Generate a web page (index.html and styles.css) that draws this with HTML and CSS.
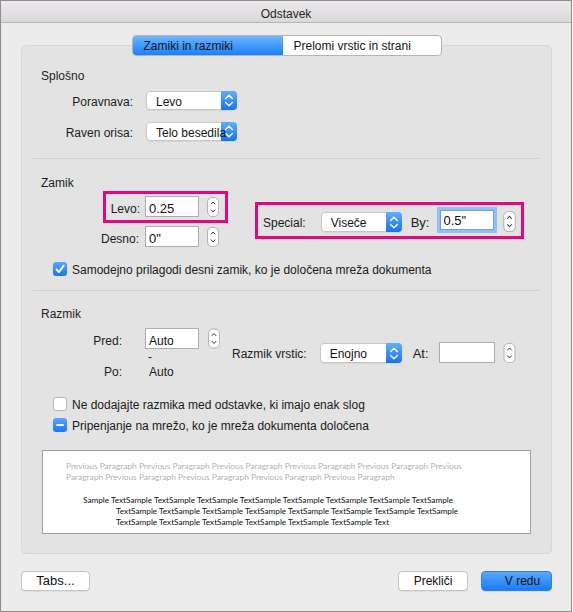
FILE: index.html
```html
<!DOCTYPE html>
<html lang="sl">
<head>
<meta charset="utf-8">
<title>Odstavek</title>
<link rel="stylesheet" href="styles.css">
</head>
<body>
<div class="window">
  <header class="titlebar">Odstavek</header>
  <main class="content">
    <nav class="tabs">
      <div class="tab tab-active">Zamiki in razmiki</div>
      <div class="tab tab-second">Prelomi vrstic in strani</div>
    </nav>

    <div class="panel">
      <!-- General -->
      <section class="group group-general">
        <div class="heading">Splošno</div>
        <div class="general-row">
          <span class="label general-label">Poravnava:</span>
          <div class="popup popup-general">
            <span class="popup-text">Levo</span>
            <span class="popup-arrows"><svg width="16" height="19" viewBox="0 0 16 19"><path d="M4.6 7.4 L8 4.2 L11.4 7.4 M4.6 11.6 L8 14.8 L11.4 11.6" fill="none" stroke="#fff" stroke-width="1.4" stroke-linecap="round" stroke-linejoin="round"/></svg></span>
          </div>
        </div>
        <div class="general-row">
          <span class="label general-label">Raven orisa:</span>
          <div class="popup popup-general">
            <span class="popup-text">Telo besedila</span>
            <span class="popup-arrows"><svg width="16" height="19" viewBox="0 0 16 19"><path d="M4.6 7.4 L8 4.2 L11.4 7.4 M4.6 11.6 L8 14.8 L11.4 11.6" fill="none" stroke="#fff" stroke-width="1.4" stroke-linecap="round" stroke-linejoin="round"/></svg></span>
          </div>
        </div>
      </section>

      <!-- Indentation -->
      <section class="group group-indent">
        <div class="heading">Zamik</div>
        <div class="indent-body">
          <div class="indent-left">
            <div class="field-row field-levo highlight">
              <span class="label label-levo">Levo:</span>
              <div class="input input-indent">0.25</div>
              <svg class="stepper stepper-indent" viewBox="0 0 12 20"><rect x="0.5" y="0.5" width="11" height="19" rx="4.5" fill="#fff" stroke="#b3b3b3"/><path d="M3.8 7.4 L6 5 L8.2 7.4 M3.8 12.6 L6 15 L8.2 12.6" fill="none" stroke="#3a3a3a" stroke-width="1"/></svg>
            </div>
            <div class="field-row field-desno">
              <span class="label label-desno">Desno:</span>
              <div class="input input-indent">0"</div>
              <svg class="stepper stepper-indent" viewBox="0 0 12 20"><rect x="0.5" y="0.5" width="11" height="19" rx="4.5" fill="#fff" stroke="#b3b3b3"/><path d="M3.8 7.4 L6 5 L8.2 7.4 M3.8 12.6 L6 15 L8.2 12.6" fill="none" stroke="#3a3a3a" stroke-width="1"/></svg>
            </div>
          </div>
          <div class="special highlight">
            <span class="label special-label">Special:</span>
            <div class="popup popup-special">
              <span class="popup-text">Viseče</span>
              <span class="popup-arrows"><svg width="16" height="19" viewBox="0 0 16 19"><path d="M4.6 7.4 L8 4.2 L11.4 7.4 M4.6 11.6 L8 14.8 L11.4 11.6" fill="none" stroke="#fff" stroke-width="1.4" stroke-linecap="round" stroke-linejoin="round"/></svg></span>
            </div>
            <span class="label-large by-label">By:</span>
            <div class="input input-by">0.5"</div>
            <svg class="stepper stepper-by" viewBox="0 0 12 20"><rect x="0.5" y="0.5" width="11" height="19" rx="4.5" fill="#fff" stroke="#b3b3b3"/><path d="M3.8 7.4 L6 5 L8.2 7.4 M3.8 12.6 L6 15 L8.2 12.6" fill="none" stroke="#3a3a3a" stroke-width="1"/></svg>
          </div>
        </div>
        <div class="check-row check-auto">
          <span class="checkbox checkbox-on"><svg width="14" height="14" viewBox="0 0 14 14"><path d="M3.4 7.3 L5.9 10.1 L10.7 3.6" fill="none" stroke="#fff" stroke-width="1.8" stroke-linecap="round" stroke-linejoin="round"/></svg></span>
          <span class="check-text">Samodejno prilagodi desni zamik, ko je določena mreža dokumenta</span>
        </div>
      </section>

      <!-- Spacing -->
      <section class="group group-spacing">
        <div class="heading">Razmik</div>
        <div class="spacing-body">
          <div class="spacing-left">
            <div class="field-row pred-row">
              <span class="label label-spacing">Pred:</span>
              <div class="input input-pred">Auto</div>
              <svg class="stepper stepper-pred" viewBox="0 0 12 20"><rect x="0.5" y="0.5" width="11" height="19" rx="4.5" fill="#fff" stroke="#b3b3b3"/><path d="M3.8 7.4 L6 5 L8.2 7.4 M3.8 12.6 L6 15 L8.2 12.6" fill="none" stroke="#3a3a3a" stroke-width="1"/></svg>
            </div>
            <div class="dash-row">-</div>
            <div class="po-row">
              <span class="label-plain label-spacing">Po:</span>
              <span class="po-value">Auto</span>
            </div>
          </div>
          <div class="line-spacing">
            <span class="label ls-label">Razmik vrstic:</span>
            <div class="popup popup-ls">
              <span class="popup-text">Enojno</span>
              <span class="popup-arrows"><svg width="16" height="19" viewBox="0 0 16 19"><path d="M4.6 7.4 L8 4.2 L11.4 7.4 M4.6 11.6 L8 14.8 L11.4 11.6" fill="none" stroke="#fff" stroke-width="1.4" stroke-linecap="round" stroke-linejoin="round"/></svg></span>
            </div>
            <span class="label-large at-label">At:</span>
            <div class="input input-at"></div>
            <svg class="stepper stepper-at" viewBox="0 0 12 20"><rect x="0.5" y="0.5" width="11" height="19" rx="4.5" fill="#fff" stroke="#b3b3b3"/><path d="M3.8 7.4 L6 5 L8.2 7.4 M3.8 12.6 L6 15 L8.2 12.6" fill="none" stroke="#3a3a3a" stroke-width="1"/></svg>
          </div>
        </div>
        <div class="check-row check-first">
          <span class="checkbox"></span>
          <span class="check-text">Ne dodajajte razmika med odstavke, ki imajo enak slog</span>
        </div>
        <div class="check-row check-second">
          <span class="checkbox checkbox-on"><svg width="14" height="14" viewBox="0 0 14 14"><rect x="3.3" y="6.1" width="7.4" height="1.9" rx="0.6" fill="#fff"/></svg></span>
          <span class="check-text">Pripenjanje na mrežo, ko je mreža dokumenta določena</span>
        </div>
        <div class="preview">
          <div class="preview-prev">
            <div class="preview-line">Previous Paragraph Previous Paragraph Previous Paragraph Previous Paragraph Previous Paragraph Previous</div>
            <div class="preview-line">Paragraph Previous Paragraph Previous Paragraph Previous Paragraph Previous Paragraph</div>
          </div>
          <div class="preview-sample">
            <div class="preview-line sample-first">Sample TextSample TextSample TextSample TextSample TextSample TextSample TextSample TextSample</div>
            <div class="preview-line sample-rest">TextSample TextSample TextSample TextSample TextSample TextSample TextSample TextSample</div>
            <div class="preview-line sample-rest">TextSample TextSample TextSample TextSample TextSample TextSample Text</div>
          </div>
        </div>
      </section>
    </div>

    <footer class="buttons">
      <button class="btn btn-tabs">Tabs...</button>
      <button class="btn btn-cancel">Prekliči</button>
      <button class="btn btn-ok">V redu</button>
    </footer>
  </main>
</div>
</body>
</html>
```

FILE: styles.css
```css
* {
  box-sizing: border-box;
}

html,
body {
  margin: 0;
  padding: 0;
}

body {
  width: 573px;
  height: 612px;
  overflow: hidden;
  background: #ffffff;
  font-family: "Liberation Sans", Arial, sans-serif;
  font-size: 12px;
  color: #1c1c1c;
}

/* Dialog window */
.window {
  width: 572px;
  height: 612px;
  border: 1px solid #8d8d8d;
  background: #ececec;
  display: flex;
  flex-direction: column;
}

.titlebar {
  flex: none;
  height: 22px;
  padding-top: 7px;
  line-height: 13px;
  text-align: center;
  color: #262626;
  background: linear-gradient(#ebe9eb, #dad8da);
  border-bottom: 1px solid #b6b6b6;
}

.content {
  flex: 1;
  display: flex;
  flex-direction: column;
  padding: 12px 19px 0 20px;
}

/* Segmented tab control */
.tabs {
  align-self: center;
  position: relative;
  z-index: 1;
  display: flex;
  height: 21px;
  margin-bottom: -11px;
  background: #ffffff;
  border: 1px solid #b4b4b4;
  border-radius: 4px;
  overflow: hidden;
}

.tab {
  padding: 2px 0 0 11px;
  line-height: 17px;
  white-space: nowrap;
  color: #151515;
}

.tab-active {
  width: 150px;
  background: linear-gradient(#6db5fd, #1b7ffa);
}

.tab-second {
  width: 158px;
}

/* Grouped panel */
.panel {
  background: #e3e3e3;
  border: 1px solid #d7d7d7;
  border-radius: 5px;
  padding: 0 11px 19px;
}

.group {
  padding-left: 8px;
  border-bottom: 1px solid #d0d0d0;
}

.group-general {
  padding-top: 23px;
  padding-bottom: 17px;
}

.group-indent {
  padding-top: 17px;
  padding-bottom: 12px;
}

.group-spacing {
  padding-top: 16px;
  border-bottom: none;
}

.heading {
  line-height: 15px;
  color: #1e1e1e;
}

.label {
  line-height: 15px;
  white-space: nowrap;
}

.label-plain {
  white-space: nowrap;
}

.label-large {
  font-size: 13px;
  line-height: 15px;
  white-space: nowrap;
}

/* Pop-up buttons */
.popup {
  flex: none;
  display: flex;
  height: 19px;
  background: #ffffff;
  border: 1px solid #c6c6c6;
  border-radius: 4px;
  box-shadow: 0 1px 0 rgba(0, 0, 0, 0.05);
}

.popup-text {
  position: relative;
  z-index: 1;
  flex: 1;
  min-width: 0;
  padding: 3px 0 0 9px;
  line-height: 15px;
  white-space: nowrap;
  color: #141414;
}

.popup-arrows {
  flex: none;
  display: flex;
  align-items: center;
  width: 16px;
  margin: -1px -1px -1px 0;
  background: linear-gradient(#62aefc, #1573f3);
  border-radius: 0 4px 4px 0;
}

/* Text fields and steppers */
.input {
  flex: none;
  height: 21px;
  background: #ffffff;
  border: 1px solid #adadad;
  padding: 5px 0 0 3px;
  font-size: 13px;
  line-height: 14px;
  color: #111111;
}

.stepper {
  flex: none;
  width: 12px;
  height: 20px;
}

/* General rows */
.general-row {
  display: flex;
  align-items: baseline;
  margin: 7px 0 0 12px;
}

.general-row + .general-row {
  margin-top: 12px;
}

.general-label {
  width: 80px;
  text-align: right;
}

.popup-general {
  width: 91px;
  margin-left: 13px;
}

/* Indentation rows */
.indent-body {
  display: flex;
  align-items: flex-start;
  margin-left: 54px;
}

.indent-left {
  display: flex;
  flex-direction: column;
  align-items: flex-start;
}

.field-row {
  display: flex;
  align-items: baseline;
}

.highlight {
  border: 3px solid #e4087e;
}

.field-levo {
  margin-left: 8px;
  padding: 2px 6px 3px 4px;
}

.field-desno {
  margin-top: 3px;
}

.label-levo {
  width: 30px;
  margin-right: 5px;
  text-align: right;
}

.label-desno {
  width: 44px;
  margin-right: 6px;
  text-align: right;
}

.input-indent {
  width: 54px;
}

.stepper-indent {
  align-self: center;
  margin-left: 8px;
}

.special {
  display: flex;
  align-items: flex-start;
  height: 37px;
  margin: 11px 0 0 27px;
  padding: 0 5px;
}

.special-label {
  margin-top: 11px;
}

.popup-special {
  width: 81px;
  height: 20px;
  margin: 7px 0 0 15px;
}

.by-label {
  margin: 10px 0 0 9px;
}

.input-by {
  width: 54px;
  height: 20px;
  margin: 5px 0 0 10px;
  padding-top: 3px;
  border-color: #6aa2e8;
  box-shadow: 0 0 0 3px #93bff3;
}

.stepper-by {
  width: 13px;
  height: 21px;
  margin: 6px 0 0 9px;
}

/* Checkbox rows */
.check-row {
  display: flex;
  align-items: flex-start;
  margin-left: 12px;
  line-height: 16px;
  white-space: nowrap;
}

.check-auto {
  margin-top: 15px;
}

.check-first {
  margin-top: 18px;
}

.check-second {
  margin-top: 5px;
}

.checkbox {
  flex: none;
  display: flex;
  width: 14px;
  height: 14px;
  margin-right: 5px;
  background: #ffffff;
  border: 1px solid #b5b5b5;
  border-radius: 3px;
}

.checkbox-on {
  border: none;
  background: linear-gradient(#59a6fb, #1877f4);
}

.check-text {
  color: #1a1a1a;
}

/* Spacing rows */
.spacing-body {
  display: flex;
  align-items: flex-start;
  margin-left: 39px;
}

.pred-row {
  margin-top: 6px;
}

.label-spacing {
  width: 42px;
  text-align: right;
}

.input-pred {
  width: 54px;
  margin-left: 23px;
  font-size: 12px;
}

.stepper-pred {
  align-self: center;
  height: 21px;
  margin-left: 9px;
}

.dash-row {
  margin: 1px 0 0 68px;
  line-height: 14px;
}

.po-row {
  display: flex;
  margin-top: 1px;
  line-height: 14px;
}

.po-value {
  margin-left: 27px;
}

.line-spacing {
  display: flex;
  align-items: flex-start;
  margin: 20px 0 0 12px;
}

.ls-label {
  margin-top: 5px;
}

.popup-ls {
  width: 82px;
  height: 20px;
  margin: 1px 0 0 13px;
}

.at-label {
  margin: 4px 0 0 11px;
}

.input-at {
  width: 56px;
  margin-left: 10px;
}

.stepper-at {
  width: 13px;
  margin: 1px 0 0 8px;
}

/* Paragraph preview */
.preview {
  height: 84px;
  margin: 16px 9px 0 1px;
  padding: 10px 0 0 23px;
  background: #ffffff;
  border: 1px solid #a2a2a2;
  font-family: Lato, "Liberation Sans", sans-serif;
  overflow: hidden;
}

.preview-line {
  line-height: 11px;
  white-space: nowrap;
}

.preview-prev {
  font-size: 8.4px;
  color: #b3b3b3;
}

.preview-sample {
  margin-top: 12px;
  font-size: 8.2px;
  color: #111111;
}

.sample-first {
  margin-left: 17px;
}

.sample-rest {
  margin-left: 50px;
}

/* Footer buttons */
.buttons {
  display: flex;
  margin-top: 17px;
}

.btn {
  height: 20px;
  padding: 0;
  background: #ffffff;
  border: 1px solid #c4c4c4;
  border-radius: 4px;
  font-family: "Liberation Sans", Arial, sans-serif;
  font-size: 12px;
  line-height: 18px;
  color: #121212;
  box-shadow: 0 1px 0 rgba(0, 0, 0, 0.05);
}

.btn-tabs {
  width: 69px;
  font-size: 13px;
}

.btn-cancel {
  width: 70px;
  margin-left: auto;
}

.btn-ok {
  width: 71px;
  margin-left: 13px;
  padding-left: 12px;
  background: linear-gradient(#5aa8fc, #1a7cf8);
  border-color: #2e7fe9;
}
```
